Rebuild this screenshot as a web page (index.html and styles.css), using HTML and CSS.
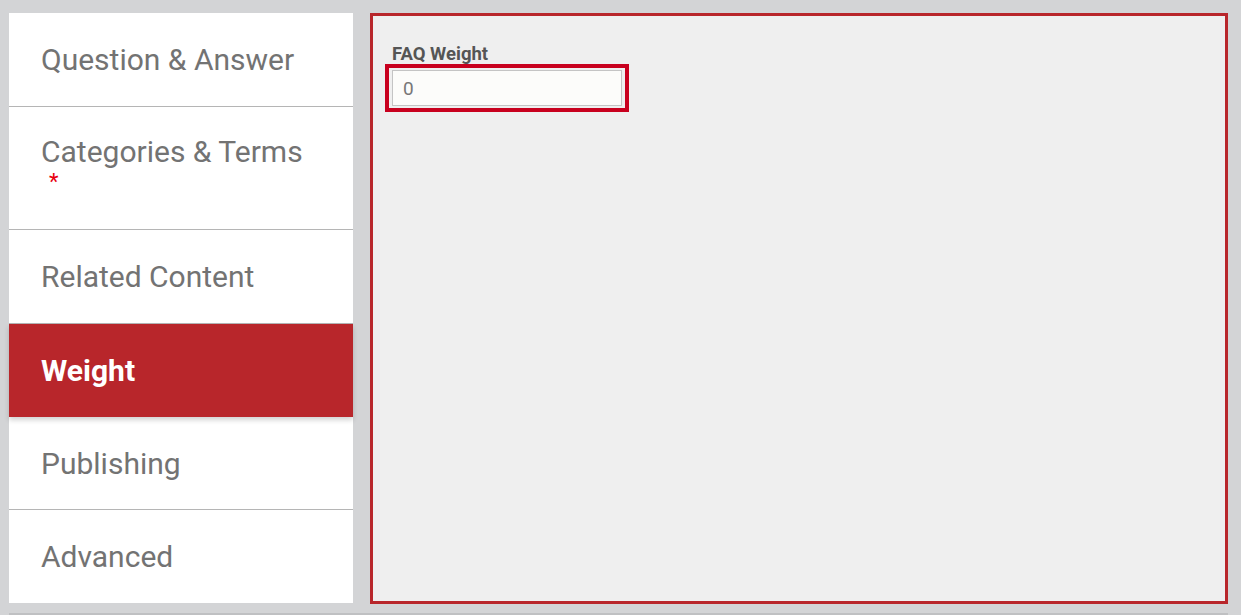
FILE: index.html
```html
<!DOCTYPE html>
<html>
<head>
<meta charset="utf-8">
<link rel="stylesheet" href="styles.css">
</head>
<body>
<div class="page">
  <div class="layout">
    <nav class="tabs">
      <div class="tab tall">Question &amp; Answer</div>
      <div class="tab tab-req"><span class="tab-text">Categories &amp; Terms</span><span class="req">*</span></div>
      <div class="tab tall">Related Content</div>
      <div class="tab active">Weight</div>
      <div class="tab">Publishing</div>
      <div class="tab last">Advanced</div>
    </nav>
    <main class="panel">
      <label class="field-label" for="w">FAQ Weight</label>
      <div class="focus-ring">
        <input id="w" class="field-input" type="text" value="0">
      </div>
    </main>
  </div>
  <div class="bottom-line"></div>
</div>
</body>
</html>
```
FILE: styles.css
```css
html, body {
  margin: 0;
  padding: 0;
  background: #d3d4d6;
  font-family: Roboto, "Liberation Sans", sans-serif;
}
.page {
  padding: 13px 13px 0 9px;
}
.layout {
  display: flex;
  gap: 17px;
  align-items: flex-start;
}
.tabs {
  width: 344px;
  background: #fff;
  display: flex;
  flex-direction: column;
}
.tab {
  height: 93px;
  box-sizing: border-box;
  padding: 0 32px;
  display: flex;
  align-items: center;
  font-size: 30px;
  color: #737373;
  border-bottom: 1px solid #b5b5b5;
}
.tab.tall {
  height: 94px;
}
.tab-req {
  height: 123px;
  flex-direction: column;
  align-items: flex-start;
  justify-content: flex-start;
  padding-top: 30px;
}
.tab-text {
  display: block;
  line-height: 30px;
}
.req {
  display: block;
  color: #e8000f;
  font-size: 22px;
  line-height: 20px;
  margin-top: 5px;
  margin-left: 8px;
}
.tab.active {
  background: #b8262b;
  color: #fff;
  font-weight: 700;
  border-bottom: none;
  box-shadow: 0 3px 5px rgba(0,0,0,0.18);
  position: relative;
  z-index: 1;
}
.tab.last {
  border-bottom: none;
}
.panel {
  width: 858px;
  height: 591px;
  box-sizing: border-box;
  border: 3px solid #b8262b;
  background: #efefef;
  padding: 28px 12px 0 12px;
  display: flex;
  flex-direction: column;
  align-items: flex-start;
}
.field-label {
  font-size: 18.5px;
  font-weight: 700;
  color: #555;
  margin-left: 7px;
  line-height: 20px;
}
.focus-ring {
  border: 4px solid #c8001e;
  padding: 2px 3px;
}
.field-input {
  display: block;
  width: 230px;
  height: 36px;
  box-sizing: border-box;
  border: 1px solid #c4c4c4;
  background: #fcfcfa;
  font-family: Roboto, "Liberation Sans", sans-serif;
  font-size: 19px;
  color: #777;
  padding: 0 10px;
  margin: 0;
  outline: none;
}
.bottom-line {
  margin-top: 9px;
  height: 2px;
  background: #bfc0c2;
}
```
